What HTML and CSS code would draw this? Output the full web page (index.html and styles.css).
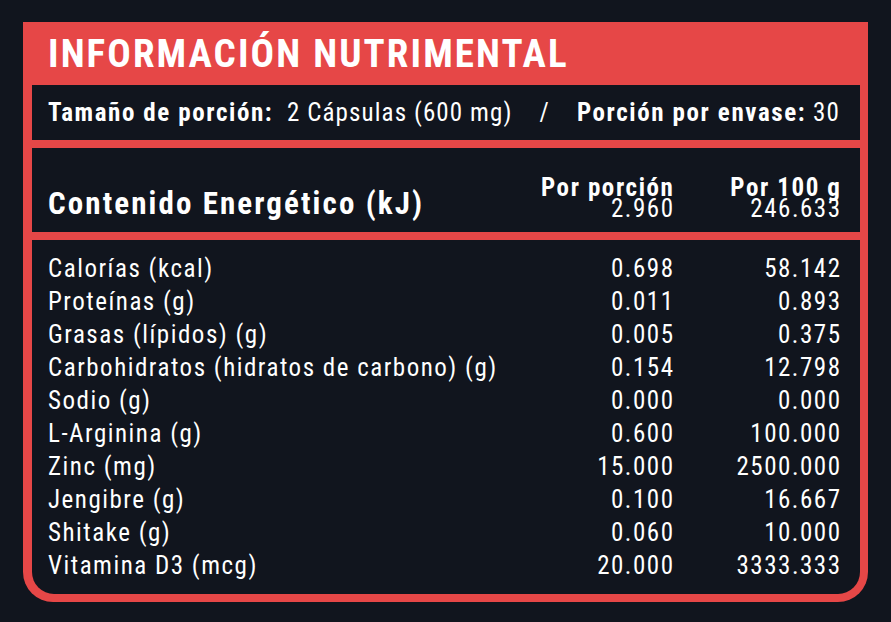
FILE: index.html
```html
<!DOCTYPE html>
<html lang="es">
<head>
<meta charset="utf-8">
<title>Información Nutrimental</title>
<link rel="stylesheet" href="styles.css">
</head>
<body>
<div class="card">
  <div class="title">INFORMACIÓN NUTRIMENTAL</div>
  <div class="panel serving">
    <div><b>Tamaño de porción:</b>&nbsp; 2 Cápsulas (600 mg)</div>
    <div class="slash">/</div>
    <div><b>Porción por envase:</b> 30</div>
  </div>
  <div class="panel energy">
    <div class="energy-label">Contenido Energético (kJ)</div>
    <div class="num"><b>Por porción</b><br>2.960</div>
    <div class="num"><b>Por 100 g</b><br>246.633</div>
  </div>
  <div class="panel rows">
    <div>Calorías (kcal)</div><div class="num">0.698</div><div class="num">58.142</div>
    <div>Proteínas (g)</div><div class="num">0.011</div><div class="num">0.893</div>
    <div>Grasas (lípidos) (g)</div><div class="num">0.005</div><div class="num">0.375</div>
    <div>Carbohidratos (hidratos de carbono) (g)</div><div class="num">0.154</div><div class="num">12.798</div>
    <div>Sodio (g)</div><div class="num">0.000</div><div class="num">0.000</div>
    <div>L-Arginina (g)</div><div class="num">0.600</div><div class="num">100.000</div>
    <div>Zinc (mg)</div><div class="num">15.000</div><div class="num">2500.000</div>
    <div>Jengibre (g)</div><div class="num">0.100</div><div class="num">16.667</div>
    <div>Shitake (g)</div><div class="num">0.060</div><div class="num">10.000</div>
    <div>Vitamina D3 (mcg)</div><div class="num">20.000</div><div class="num">3333.333</div>
  </div>
</div>
</body>
</html>
```
FILE: styles.css
```css
* { box-sizing: border-box; }
html, body { margin: 0; padding: 0; }
body {
  background: #11151e;
  width: 891px;
  height: 622px;
  overflow: hidden;
  font-family: "Roboto Condensed", Roboto, "Liberation Sans", sans-serif;
  color: #ffffff;
  padding: 22px 0 0 23px;
}
.card {
  width: 845px;
  background: #e64747;
  padding: 0 8px 8px 9px;
  border-radius: 0 0 30px 30px;
  display: flex;
  flex-direction: column;
  gap: 8px;
}
.title {
  height: 63px;
  line-height: 63px;
  padding: 1px 0 0 16px;
  font-size: 39px;
  font-weight: 700;
  letter-spacing: 2.1px;
  margin-bottom: -8px;
}
.panel {
  background: #11151e;
  padding: 0 20px 0 16px;
}
.serving {
  height: 55px;
  padding-top: 1px;
  line-height: 54px;
  font-size: 25px;
  letter-spacing: 1.1px;
  display: flex;
  justify-content: space-between;
}
.serving b { font-weight: 700; letter-spacing: 1.6px; }
.energy {
  height: 84px;
  display: grid;
  grid-template-columns: 1fr 150px 167px;
  align-items: end;
  padding-bottom: 13px;
  font-size: 25px;
  line-height: 21px;
  letter-spacing: 1.5px;
}
.energy b { letter-spacing: 1.6px; }
.energy-label {
  font-size: 31px;
  line-height: 31px;
  font-weight: 700;
  letter-spacing: 2.1px;
  margin-bottom: 0;
}
.num { text-align: right; margin-right: -1.5px; }
.rows {
  height: 354px;
  border-radius: 0 0 22px 22px;
  display: grid;
  grid-template-columns: 1fr 150px 167px;
  grid-auto-rows: 33px;
  padding-top: 12px;
  font-size: 25px;
  line-height: 33px;
  letter-spacing: 1.5px;
}
```
